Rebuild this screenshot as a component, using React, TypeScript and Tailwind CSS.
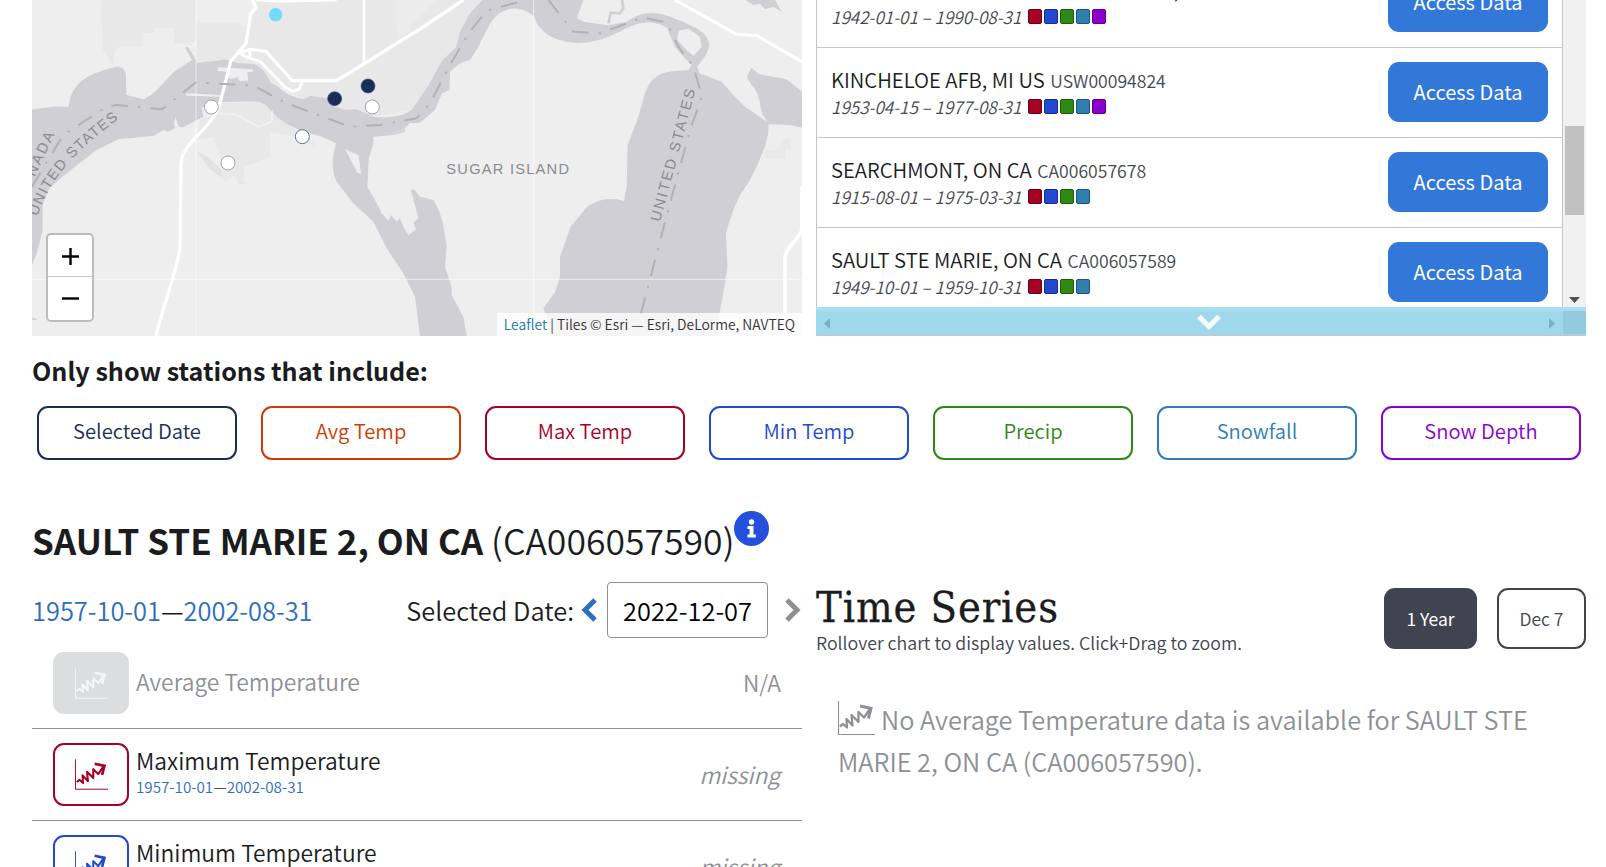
import React from "react";

const WATER = "#d0cfd4";
const LAND = "#eeeeee";

function StationMap() {
  return (
    <svg className="block h-[336px] w-[770px]" viewBox="36 0 2310 1008" preserveAspectRatio="none">
      <rect x="36" width="2310" height="1008" fill={LAND} />
      {/* built-up areas */}
      <g fill="#e8e8e8">
        <path d="M243 0H528V70L535 68L660 68L668 85L690 60L708 0H1130V80L1142 110L1170 92V0H1390L1350 60L1310 130L1280 180L1225 255L1170 330L1060 350L940 325L900 292L850 298L760 250L700 192H600L520 180L530 120L510 130L462 130V84H402V98H370V138H300L285 152L280 198L262 170L248 150Z" />
        <path d="M590 340L600 310L740 305L770 350L800 370L880 425L890 440L820 410L750 395V470L715 485L672 500L670 545L685 553L655 553L645 525L612 545L600 470L580 410L530 420L540 360Z" />
        <path d="M2284 418H2312V447H2296V475H2234V450H2262L2280 440Z" />
      </g>
      <path d="M1130 0H1250L1142 108L1128 50Z" fill="#ececec" />
      {/* water */}
      <g fill={WATER}>
        <path d="M36 328L100 320L146 320C150 286 162 264 178 248C210 220 262 206 290 200C312 200 318 214 318 230L319 285L372 298L400 280C430 254 445 228 470 210L516 180L495 143L504 140L533 188C570 185 600 182 615 178L650 188L703 192C733 206 742 230 755 250C790 265 780 280 850 298L872 288L920 294L942 318L975 330L1010 328L1060 350C1120 356 1165 344 1178 325L1225 256L1268 180L1308 142L1320 95L1350 40L1388 0H1690L1674 45L1672 58L1715 65L1765 76L1820 65C1850 45 1870 40 1895 39C1940 42 1960 55 1990 66L2030 85C2060 105 2068 120 2067 140C2062 165 2045 180 2032 200L2038 220L2070 232L2105 245L2140 285L2172 318L2242 366L2226 340C2219 300 2212 270 2195 255L2180 230L2194 203L2216 222L2300 238L2346 275V383L2310 375L2245 373V400L2235 440L2210 500L2190 540L2160 585L2140 630L2128 665L2118 700L2122 800L2112 870L2098 940L2096 1008H1602L1570 925L1606 875L1620 830L1620 770L1652 680L1700 622C1720 608 1735 602 1755 598L1790 597L1812 604L1820 560L1823 435L1855 350L1875 280C1895 225 1925 215 1975 212L2005 210L2015 195L1985 165L1965 140L1940 82C1905 64 1870 60 1815 87C1750 120 1720 128 1670 129C1610 124 1580 110 1550 70L1542 48C1530 38 1500 20 1470 27C1440 35 1420 48 1400 90L1375 140L1350 180L1320 190L1290 215L1288 270L1266 280L1245 330L1200 368L1170 370L1150 388L1158 395L1120 405L1060 410C1062 440 1052 450 1046 480L1042 560L1065 600L1085 640L1105 662L1113 645L1130 665L1140 655L1150 680L1165 706L1188 688L1180 668L1195 655L1185 615L1172 570L1182 568L1200 590L1240 600C1265 640 1272 680 1280 740L1275 800L1295 860V885L1330 950L1340 1008H1200L1185 890L1150 820L1100 745L1060 665L1000 610L950 545C934 510 935 475 948 430L900 408L850 395L800 372L770 350L740 318C720 300 700 304 600 306L545 322L550 350L490 382L476 380L466 350L462 370L465 385L445 395L430 390L400 408L295 418L230 450L140 520L88 565L68 612V690L52 755L36 795Z" />
        <path d="M2176 0H2265L2285 35L2260 20L2235 28L2220 12L2200 15Z" />
        <path d="M36 953L50 956V961L36 959Z" />
      </g>
      {/* islets and piers */}
      <g fill={LAND}>
        <path d="M1710 0L1672 45L1690 65L1765 76L1790 60L1810 20L1806 0Z" />
        <path d="M975 447L1016 466L1023 522L1012 518Z" />
        <path d="M1976 92L2005 86L2040 110L2045 140L2020 168L1990 140L1972 120Z" />
        <path d="M595 202L700 208L698 215L682 216L684 242L660 243L650 232L630 238L620 216L592 212Z" />
        <path d="M498 280L600 285V290L498 287Z" />
      </g>
      <path d="M530 455L560 468L605 510L607 535L570 508Z" fill="#e2e2e3" />
      <path d="M1806 0L1810 25L1800 40L1772 38L1765 70" fill="none" stroke={WATER} strokeWidth="8" />
      <path d="M1155 388L1118 400" stroke="#d5d5d8" strokeWidth="8" />
      {/* roads */}
      <g fill="none" stroke="#ffffff" strokeLinejoin="round">
        <path strokeWidth="10" d="M697 0L708 22L692 42L678 130L632 184L600 310C575 380 520 410 500 445C480 475 483 490 483 520L480 740C475 800 440 880 408 1008" />
        <path strokeWidth="10" d="M655 160L690 148L738 154L817 242H950L1200 87L1330 0" />
        <path strokeWidth="9" d="M660 160L690 175L720 184L795 262L820 274L838 266L848 243M690 148V175" />
        <path strokeWidth="8" d="M1032 0V185M708 0L780 4L950 0" />
        <path strokeWidth="9" d="M1965 0L2150 103L2210 107L2346 185" />
        <path strokeWidth="11" d="M2346 560V690C2335 720 2300 740 2295 770V1008" />
        <path strokeWidth="5" opacity=".45" d="M600 340L650 345L715 380L755 365L757 330" />
        <path strokeWidth="3" opacity=".6" d="M528 0V1008M1541 0V1008M36 838H2346" />
      </g>
      {/* border line */}
      <g fill="none" stroke="#b2b2b3" strokeWidth="6" strokeDasharray="50 30 7 30">
        <path d="M36 560L90 470L130 405L260 320L290 315L425 328L528 247L700 257L800 310L990 380L1080 375L1190 355L1230 310L1290 195L1345 100L1400 32L1520 0" />
        <path d="M1585 0L1660 95L1740 100L1870 52L1940 68L1975 140L2020 200L2046 290L2010 390L1950 610L1845 1008" />
      </g>
      {/* labels */}
      <g fill="#8b8b8e" fontFamily="'Liberation Sans', Arial, sans-serif" fontSize="44">
        <path id="strait" d="M52 650C90 540 150 465 302 352" fill="none" />
        <path id="canada" d="M44 532L106 398" fill="none" />
        <text><textPath href="#strait" textLength="388">UNITED STATES</textPath></text>
        <text><textPath href="#canada" textLength="142">NADA</textPath></text>
        <text x="1279" y="523" textLength="368">SUGAR ISLAND</text>
        <text transform="translate(1920 667) rotate(-75)" textLength="410">UNITED STATES</text>
      </g>
      {/* stations */}
      <circle cx="767" cy="44" r="20" fill="#73dbf3" />
      <g fill="#1a2d56" stroke="#31518f" strokeWidth="2">
        <circle cx="944" cy="296" r="21" />
        <circle cx="1044" cy="258" r="21" />
      </g>
      <g fill="#ffffff" stroke="#9aa3b8" strokeWidth="3">
        <circle cx="574" cy="321" r="21" />
        <circle cx="624" cy="489" r="21" />
        <circle cx="1057" cy="321" r="21" />
        <circle cx="847" cy="410" r="21" stroke="#5773ab" />
      </g>
    </svg>
  );
}

const SWATCHES: Record<string, string> = {
  max: "bg-[#a50226] border-[#6b0119]",
  min: "bg-[#2349d0] border-[#152f8a]",
  precip: "bg-[#2f8a15] border-[#1e5a0d]",
  snow: "bg-[#307fb1] border-[#1f5475]",
  depth: "bg-[#8c00cf] border-[#5b0087]",
};

const STATIONS = [
  { name: "SAULT STE MARIE SANDERSON FIELD, MI US", id: "USW00014847", range: "1942-01-01 – 1990-08-31", vars: ["max", "min", "precip", "snow", "depth"] },
  { name: "KINCHELOE AFB, MI US", id: "USW00094824", range: "1953-04-15 – 1977-08-31", vars: ["max", "min", "precip", "snow", "depth"] },
  { name: "SEARCHMONT, ON CA", id: "CA006057678", range: "1915-08-01 – 1975-03-31", vars: ["max", "min", "precip", "snow"] },
  { name: "SAULT STE MARIE, ON CA", id: "CA006057589", range: "1949-10-01 – 1959-10-31", vars: ["max", "min", "precip", "snow"] },
];

function StationList() {
  return (
    <div className="relative h-[336px] w-[770px] overflow-hidden border-b border-[#c4c6c9]">
      <div className="flex h-[312px]">
        <div className="w-[747px] border-x border-[#c4c6ca]">
          <div className="-mt-[42px]">
            {STATIONS.map((s) => (
              <div key={s.id} className="flex h-[90px] items-start justify-between border-b border-[#c4c6c9] pt-[14px] pr-[14px] pl-[14px]">
                <div className="mt-[4px] whitespace-nowrap">
                  <div className="h-[27px] text-[20.3px] leading-[27px] font-[350] text-[#1b1c1e]">
                    {s.name} <span className="ml-px text-[17.6px] text-[#45484f]">{s.id}</span>
                  </div>
                  <div className="flex h-[26px] items-center text-[17.1px] leading-[27px] font-[350] text-[#45484f]">
                    <span className="w-[197px] shrink-0 italic">{s.range}</span>
                    <span className="mt-[1px] flex gap-[2px]">
                      {s.vars.map((v) => (
                        <i key={v} className={"h-[15px] w-[14px] rounded-[2px] border " + SWATCHES[v]} />
                      ))}
                    </span>
                  </div>
                </div>
                <button className="h-[60px] w-[160px] rounded-[11px] bg-[#3278d9] pb-px text-[20px] font-normal text-white">Access Data</button>
              </div>
            ))}
          </div>
        </div>
        <div className="flex w-[23px] flex-col items-center bg-[#f1f1f1]">
          <div className="mt-[126px] h-[89px] w-[19px] bg-[#c1c1c1]" />
          <svg className="mt-[82px] h-[6px] w-[11px]" viewBox="0 0 11 6"><path d="M0 0H11L5.5 6Z" fill="#505050" /></svg>
        </div>
      </div>
      <div className="absolute top-[307px] left-0 flex h-[28px] w-full border-t-4 border-[#a6dff1] bg-[#9fd8ea]">
        <div className="flex w-[747px] items-center justify-between px-2">
          <svg className="h-[11px] w-[6px]" viewBox="0 0 6 11"><path d="M6 0V11L0 5.5Z" fill="#76b0c4" /></svg>
          <svg className="-mt-[2px] ml-[39px] h-[16px] w-[24px]" viewBox="0 0 24 16"><path d="M2 2.5L12 12.5L22 2.5" fill="none" stroke="#f5fbfd" strokeWidth="5.2" /></svg>
          <svg className="h-[11px] w-[6px]" viewBox="0 0 6 11"><path d="M0 0V11L6 5.5Z" fill="#76b0c4" /></svg>
        </div>
        <div className="h-[23px] w-[23px] bg-[#94cadf]" />
      </div>
    </div>
  );
}

const FILTERS = [
  { label: "Selected Date", cls: "border-[#1b2e58] text-[#1b2e58]" },
  { label: "Avg Temp", cls: "border-[#cc3c00] text-[#cc3c00]" },
  { label: "Max Temp", cls: "border-[#a50226] text-[#a50226]" },
  { label: "Min Temp", cls: "border-[#2349d0] text-[#2349d0]" },
  { label: "Precip", cls: "border-[#2f8a15] text-[#2f8a15]" },
  { label: "Snowfall", cls: "border-[#307fb1] text-[#307fb1]" },
  { label: "Snow Depth", cls: "border-[#8c00cf] text-[#8c00cf]" },
];

function ChartIcon({ className }: { className: string }) {
  return (
    <svg className={className} viewBox="0 0 37 34" fill="none" stroke="currentColor" strokeLinejoin="round">
      <path d="M.5 0V33.5H37" strokeWidth="1.1" strokeLinejoin="miter" />
      <path d="M2 25.5L5 23L9 26.5L8.5 18L14.5 24.5L13.5 14L20.5 21L20.5 11L26 16.5L31.5 8.5" strokeWidth="2.3" />
      <path d="M22 5L33 7.3L30.4 17.5" strokeWidth="3" strokeLinejoin="miter" />
    </svg>
  );
}

function Row({ label, dates, value, cls, off }: { label: string; dates?: boolean; value: string; cls: string; off?: boolean }) {
  return (
    <div className={"flex items-center justify-between border-b border-[#8d9095] pr-[21px] pl-[21px] " + (off ? "h-[91px]" : "h-[92px]")}>
      <div className="flex items-center gap-[7px]">
        <div className={"flex w-[76px] items-center justify-center rounded-[11px] border-2 " + (off ? "h-[62px] " : "h-[63px] ") + cls}>
          <ChartIcon className="h-[31px] w-[33px]" />
        </div>
        <div>
          <div className={"text-[22.8px] font-[350] " + (off ? "pb-[2px] leading-[32px] text-[#8d9095]" : "leading-[30px] text-[#1b1c1e]")}>{label}</div>
          {dates && (
            <div className="mt-[-1px] mb-[7px] text-[15.2px] leading-[22px] font-[350] text-[#2d6ebf]">
              1957-10-01<span className="text-[#1b1c1e]">—</span>2002-08-31
            </div>
          )}
        </div>
      </div>
      <div className={"text-[22.8px] font-[350] text-[#8d9095] " + (off ? "" : "pt-[2px] pr-px italic")}>{value}</div>
    </div>
  );
}

export default function App() {
  return (
    <div className="h-[867px] w-[1606px] overflow-hidden bg-white pr-5 pl-8 font-['Noto_Sans_CJK_SC','Noto_Sans',sans-serif] text-[#1b1c1e]">
      <div className="flex gap-[14px]">
        <div className="relative h-[336px] w-[770px] overflow-hidden">
          <StationMap />
          <div className="absolute top-[233px] left-[14px] flex h-[89px] w-[48px] flex-col rounded-[5px] border-2 border-[#bdbdbd] bg-white">
            <div className="flex h-[42px] items-center justify-center border-b border-[#c8c8c8] pt-[2px]">
              <svg className="h-[17px] w-[17px]" viewBox="0 0 17 17"><path d="M0 8.5H17M8.5 0V17" stroke="#000" strokeWidth="2.4" /></svg>
            </div>
            <div className="flex flex-1 items-center justify-center">
              <svg className="h-[17px] w-[17px]" viewBox="0 0 17 17"><path d="M0 8.5H17" stroke="#000" strokeWidth="2.4" /></svg>
            </div>
          </div>
          <div className="absolute right-0 bottom-0 h-[23px] bg-white/80 px-[7px] text-[13.9px] leading-[22px] font-[350] whitespace-nowrap text-[#333]">
            <span className="text-[#2279ae]">Leaflet</span> | Tiles © Esri — Esri, DeLorme, NAVTEQ
          </div>
        </div>
        <StationList />
      </div>

      <h2 className="mt-[14px] h-[40px] text-[25.1px] leading-[40px] font-bold">Only show stations that include:</h2>
      <div className="mt-[16px] flex gap-6 pl-[5px]">
        {FILTERS.map((f) => (
          <button key={f.label} className={"h-[54px] w-[200px] shrink-0 rounded-[11px] border-2 pb-[3px] text-[20.2px] font-[350] " + f.cls}>
            {f.label}
          </button>
        ))}
      </div>

      <div className="mt-[50px] flex h-[60px]">
        <h1 className="text-[35px] leading-[60px] font-[350] whitespace-nowrap">
          <b className="font-bold">SAULT STE MARIE 2, ON CA</b> <span className="text-[35.6px]">(CA006057590)</span>
        </h1>
        <svg className="mt-[1px] h-[35px] w-[35px]" viewBox="0 0 35 35">
          <circle cx="17.5" cy="17.5" r="17.5" fill="#2450dc" />
          <circle cx="17.5" cy="11" r="2.7" fill="#fff" />
          <path d="M13.5 15H19.5V23.5H21.8V26.5H13.5V23.5H15.6V18H13.5Z" fill="#fff" />
        </svg>
      </div>

      <div className="flex gap-[14px]">
        <div className="w-[770px]">
          <div className="mt-[12px] flex h-[56px] items-center justify-between text-[25.4px] font-[350]">
            <div className="text-[#2d6ebf]">1957-10-01<span className="text-[#1b1c1e]">—</span>2002-08-31</div>
            <div className="flex items-center">
              <span>Selected Date:</span>
              <svg className="ml-[7px] h-[24px] w-[16px]" viewBox="0 0 16 24"><path d="M14 2L4 12L14 22" fill="none" stroke="#2b6fc0" strokeWidth="5" /></svg>
              <div className="mr-[17px] ml-[10px] flex h-[56px] w-[161px] items-center justify-center rounded-[4px] border border-[#8d9095] text-[25.4px] text-black">2022-12-07</div>
              <svg className="mr-px h-[24px] w-[16px]" viewBox="0 0 16 24"><path d="M2 2L12 12L2 22" fill="none" stroke="#8d9095" strokeWidth="5" /></svg>
            </div>
          </div>
          <Row off label="Average Temperature" value="N/A" cls="border-[#dcdddf] bg-[#dcdddf] text-[#f6f6f7]" />
          <Row dates label="Maximum Temperature" value="missing" cls="border-[#a50226] text-[#a50226]" />
          <Row dates label="Minimum Temperature" value="missing" cls="border-[#2349d0] text-[#2349d0]" />
        </div>
        <div className="w-[770px]">
          <div className="flex h-[90px] justify-between">
            <div className="pt-[11px]">
              <h2 className="font-['DejaVu_Serif_Condensed','DejaVu_Serif',serif] text-[43px] leading-[52px] tracking-[0.9px] [-webkit-text-stroke:0.3px_#1b1c1e]">Time Series</h2>
              <p className="-mt-[3px] text-[17.75px] leading-[24px] font-[350] text-[#3f4450]">Rollover chart to display values. Click+Drag to zoom.</p>
            </div>
            <div className="flex gap-5 pt-[18px] text-[17.5px]">
              <button className="h-[61px] w-[93px] rounded-[11px] bg-[#3f4450] pt-px text-white">1 Year</button>
              <button className="h-[61px] w-[89px] rounded-[11px] border-2 border-[#3f4450] pt-px font-[350] text-[#3f4450]">Dec 7</button>
            </div>
          </div>
          <p className="mt-[38px] pl-[22px] text-[25.3px] leading-[42px] font-[350] whitespace-nowrap text-[#8d9095]">
            <ChartIcon className="mr-[6px] -mt-[2px] inline-block h-[34px] w-[37px] align-[-5px]" />
            No Average Temperature data is available for SAULT STE
            <br />
            MARIE 2, ON CA (CA006057590).
          </p>
        </div>
      </div>
    </div>
  );
}
